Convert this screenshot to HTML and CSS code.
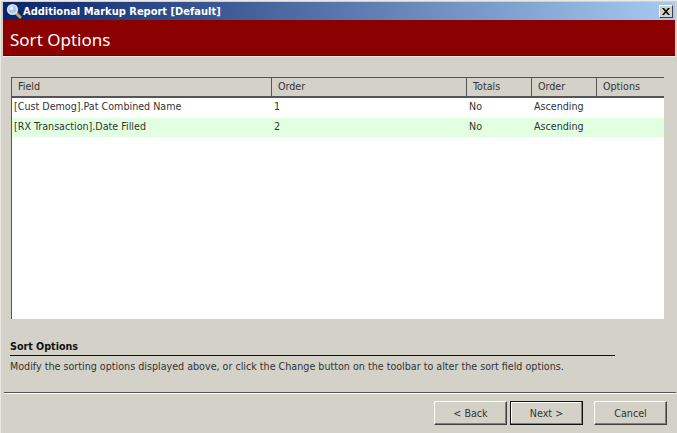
FILE: index.html
```html
<!DOCTYPE html>
<html>
<head>
<meta charset="utf-8">
<title>Additional Markup Report [Default]</title>
<link rel="stylesheet" href="styles.css">
</head>
<body>
<div class="window">
  <div class="titlebar">
    <svg class="appicon" width="16" height="16" viewBox="0 0 16 16">
      <path d="M9.5 9.5 L14 14" stroke="#c9a05a" stroke-width="3" stroke-linecap="round"/>
      <circle cx="6.5" cy="6.5" r="4.8" fill="#a9cdf0" stroke="#dfe6ee" stroke-width="1.6"/>
      <circle cx="5.5" cy="5.2" r="1.6" fill="#eef6fd"/>
    </svg>
    <span class="titletext">Additional Markup Report [Default]</span>
    <span class="closebtn">
      <svg width="8" height="7" viewBox="0 0 8 7"><path d="M0 0 L2 0 L4 2.2 L6 0 L8 0 L5 3.5 L8 7 L6 7 L4 4.8 L2 7 L0 7 L3 3.5 Z" fill="#000"/></svg>
    </span>
  </div>
  <div class="banner">Sort Options</div>
  <div class="content">
    <div class="grid">
      <div class="row head">
        <div class="cell c1">Field</div>
        <div class="cell c2">Order</div>
        <div class="cell c3">Totals</div>
        <div class="cell c4">Order</div>
        <div class="cell c5">Options</div>
      </div>
      <div class="row">
        <div class="cell c1">[Cust Demog].Pat Combined Name</div>
        <div class="cell c2">1</div>
        <div class="cell c3">No</div>
        <div class="cell c4">Ascending</div>
        <div class="cell c5"></div>
      </div>
      <div class="row alt">
        <div class="cell c1">[RX Transaction].Date Filled</div>
        <div class="cell c2">2</div>
        <div class="cell c3">No</div>
        <div class="cell c4">Ascending</div>
        <div class="cell c5"></div>
      </div>
    </div>
    <div class="help">
      <div class="helptitle">Sort Options</div>
      <div class="helptext">Modify the sorting options displayed above, or click the Change button on the toolbar to alter the sort field options.</div>
    </div>
  </div>
  <div class="footer">
    <button class="btn back">&lt; Back</button>
    <button class="btn next">Next &gt;</button>
    <button class="btn cancel">Cancel</button>
  </div>
</div>
</body>
</html>
```
FILE: styles.css
```css
* { box-sizing: border-box; }
html, body { margin: 0; padding: 0; }
body { width: 677px; height: 433px; overflow: hidden; background: #d3d1c8; }
.window {
  width: 677px; height: 433px;
  display: flex; flex-direction: column;
  background: #d3d1c8;
  border-top: 1px solid #ece9e2;
  border-left: 1px solid #ece9e2;
  padding: 1px 2px 0 2px;
  font-family: "DejaVu Sans Condensed", "DejaVu Sans", sans-serif;
  font-size: 10.65px;
  color: #333;
}
.titlebar {
  height: 18px; flex: none;
  display: flex; align-items: center;
  background: linear-gradient(to right, #0a246a, #a6caf0);
  padding: 0 2px 0 3px;
  color: #fff;
}
.appicon { flex: none; margin-right: 1px; }
.titletext { font-weight: bold; font-size: 11px; flex: 1; }
.closebtn {
  width: 14px; height: 13px;
  background: #d3d1c8;
  border: 1px solid;
  border-color: #fff #404040 #404040 #fff;
  display: flex; align-items: center; justify-content: center;
}
.banner {
  height: 36px; flex: none;
  background: #8b0000;
  color: #fff;
  font-family: "Noto Sans", sans-serif;
  font-size: 17px;
  line-height: 23px;
  padding: 8px 0 0 7px;
  border-bottom: 1px solid #6d0000;
  box-shadow: 0 1px 0 #f2f0ea;
}
.content { flex: 1; padding: 21px 11px 0 8px; display: flex; flex-direction: column; }
.grid {
  height: 242px; flex: none;
  background: #fff;
  border-top: 1px solid #555;
  border-left: 1px solid #555;
}
.row { display: flex; height: 20px; }
.row.alt { background: #e2ffe2; height: 19px; }
.cell { padding: 2px 0 0 2px; white-space: nowrap; overflow: hidden; }
.c1 { width: 260px; }
.c2 { width: 195px; }
.c3 { width: 65px; }
.c4 { width: 65px; }
.c5 { flex: 1; }
.head { background: #d3d1c8; height: 20px; border-bottom: 2px solid #555; }
.head .cell { border-right: 1px solid #555; padding: 2px 0 0 6px; }
.head .c5 { border-right: 0; }
.help { margin-top: 21px; margin-left: -1px; }
.helptitle {
  font-weight: bold; width: 605px;
  height: 16px;
  border-bottom: 1px solid #111;
  line-height: 14px; color: #111;
}
.helptext { padding-top: 4px; }
.footer {
  height: 41px; flex: none;
  border-top: 1px solid #555;
  box-shadow: inset 0 1px 0 #fff;
  margin: 0 -1px 0 1px;
  display: flex; justify-content: flex-end; align-items: flex-start;
  padding: 8px 9px 0 0;
  gap: 3px;
}
.btn {
  width: 73px; height: 24px;
  background: #d3d1c8;
  border: 1px solid;
  border-color: #fff #404040 #404040 #fff;
  box-shadow: inset -1px -1px 0 #808080;
  font: inherit; color: #333;
  padding: 0;
}
.next { border: 1px solid #111; box-shadow: inset -1px -1px 0 #808080, inset 1px 1px 0 #fff; }
.cancel { margin-left: 8px; }
```
